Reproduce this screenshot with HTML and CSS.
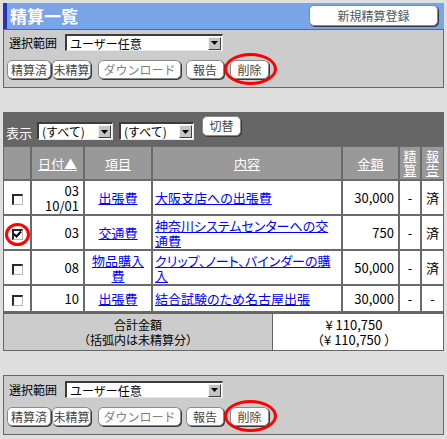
FILE: index.html
```html
<!DOCTYPE html>
<html lang="ja">
<head>
<meta charset="utf-8">
<title>精算一覧</title>
<link rel="stylesheet" href="styles.css">
</head>
<body>
<div class="page">
  <header class="titlebar">
    <h1 class="title">精算一覧</h1>
    <button class="btn btn-new">新規精算登録</button>
  </header>

  <section class="panel">
    <div class="panel-row">
      <span class="label">選択範囲</span>
      <span class="select select-range"><span class="select-value">ユーザー任意</span><span class="select-arrow"><svg width="7" height="4" viewBox="0 0 7 4"><path d="M0 0H7L3.5 4Z"/></svg></span></span>
    </div>
    <div class="btn-row">
      <button class="btn b-done">精算済</button>
      <button class="btn b-undone">未精算</button>
      <button class="btn b-dl">ダウンロード</button>
      <button class="btn b-report">報告</button>
      <button class="btn b-del">削除<span class="ring ring-btn"></span></button>
    </div>
  </section>

  <section class="list">
    <div class="toolbar">
      <span class="toolbar-label">表示</span>
      <span class="select select-filter"><span class="select-value">(すべて)</span><span class="select-arrow"><svg width="7" height="4" viewBox="0 0 7 4"><path d="M0 0H7L3.5 4Z"/></svg></span></span>
      <span class="select select-filter f2"><span class="select-value">(すべて)</span><span class="select-arrow"><svg width="7" height="4" viewBox="0 0 7 4"><path d="M0 0H7L3.5 4Z"/></svg></span></span>
      <button class="btn b-switch">切替</button>
    </div>
    <table class="grid">
      <colgroup>
        <col class="c-check"><col class="c-date"><col class="c-item"><col class="c-desc"><col class="c-amt"><col class="c-flag"><col class="c-rep">
      </colgroup>
      <thead>
        <tr>
          <th></th>
          <th><a href="#">日付▲</a></th>
          <th><a href="#">項目</a></th>
          <th><a href="#">内容</a></th>
          <th><a href="#">金額</a></th>
          <th class="stack"><a href="#">精<br>算</a></th>
          <th class="stack"><a href="#">報<br>告</a></th>
        </tr>
      </thead>
      <tbody>
        <tr class="r-tall">
          <td class="chk"><span class="cb"></span></td>
          <td class="num">03<br>10/01</td>
          <td class="ctr"><a href="#">出張費</a></td>
          <td class="desc"><a href="#">大阪支店への出張費</a></td>
          <td class="num">30,000</td>
          <td class="ctr">-</td>
          <td class="ctr">済</td>
        </tr>
        <tr class="r-tall">
          <td class="chk"><span class="cb checked"><svg width="9" height="9" viewBox="0 0 9 9"><path d="M1 4 L3.5 6.5 L8 1.5" stroke="#000" stroke-width="2" fill="none"/></svg><span class="ring ring-cb"></span></span></td>
          <td class="num">03</td>
          <td class="ctr"><a href="#">交通費</a></td>
          <td class="desc"><a href="#">神奈川システムセンターへの交<br>通費</a></td>
          <td class="num">750</td>
          <td class="ctr">-</td>
          <td class="ctr">済</td>
        </tr>
        <tr class="r-tall">
          <td class="chk"><span class="cb"></span></td>
          <td class="num">08</td>
          <td class="ctr"><a href="#">物品購入<br>費</a></td>
          <td class="desc"><a href="#">クリップ、ノート、バインダーの購<br>入</a></td>
          <td class="num">50,000</td>
          <td class="ctr">-</td>
          <td class="ctr">済</td>
        </tr>
        <tr class="r-short">
          <td class="chk"><span class="cb"></span></td>
          <td class="num">10</td>
          <td class="ctr"><a href="#">出張費</a></td>
          <td class="desc"><a href="#">結合試験のため名古屋出張</a></td>
          <td class="num">30,000</td>
          <td class="ctr">-</td>
          <td class="ctr">-</td>
        </tr>
      </tbody>
    </table>
    <div class="total">
      <div class="total-label">合計金額<br>（括弧内は未精算分）</div>
      <div class="total-value">¥ 110,750<br>（¥ 110,750 ）</div>
    </div>
  </section>

  <section class="panel panel-bottom">
    <div class="panel-row">
      <span class="label">選択範囲</span>
      <span class="select select-range"><span class="select-value">ユーザー任意</span><span class="select-arrow"><svg width="7" height="4" viewBox="0 0 7 4"><path d="M0 0H7L3.5 4Z"/></svg></span></span>
    </div>
    <div class="btn-row">
      <button class="btn b-done">精算済</button>
      <button class="btn b-undone">未精算</button>
      <button class="btn b-dl">ダウンロード</button>
      <button class="btn b-report">報告</button>
      <button class="btn b-del">削除<span class="ring ring-btn"></span></button>
    </div>
  </section>
</div>
</body>
</html>
```

FILE: styles.css
```css
* { box-sizing: border-box; }

body {
  margin: 3px;
  background: #e0dfdf;
  font-family: "Noto Sans CJK JP", "Noto Sans", sans-serif;
  font-size: 12px;
  color: #000;
}

.page { width: 441px; }

/* title bar */
.titlebar {
  display: flex;
  align-items: center;
  justify-content: space-between;
  height: 26px;
  background: #7aa4e8;
  border-left: 4px solid #2b31bd;
  padding: 0 6px 0 3px;
}
.title {
  margin: 0;
  font-size: 17px;
  font-weight: bold;
  color: #fff;
  line-height: 26px;
}

/* buttons */
.btn {
  position: relative;
  font-family: inherit;
  font-size: 12px;
  color: #444;
  background: #fff;
  border: 1px solid #8a8a8a;
  border-radius: 5px;
  box-shadow: 1px 1px 0 #3a3a3a;
  padding: 0;
  height: 19px;
  line-height: 17px;
  margin: 0;
  text-align: center;
}
.btn-new { width: 129px; height: 21px; line-height: 19px; margin-top: -1px; color: #555; }

/* panels */
.panel {
  background: #cccccc;
  border: 1px solid #666;
  height: 59px;
  padding: 4px 4px 0 3px;
}
.panel-bottom { margin-top: 24px; height: 60px; padding-top: 5px; }
.panel-row {
  display: flex;
  align-items: center;
  height: 17px;
}
.label { margin-left: 2px; width: 56px; line-height: 17px; }

.select {
  display: inline-flex;
  align-items: center;
  justify-content: space-between;
  height: 17px;
  background: #fff;
  border-style: solid;
  border-width: 2px 1px 1px 2px;
  border-color: #3c3c3c #e8e8e8 #e8e8e8 #3c3c3c;
  padding: 0 1px 0 3px;
}
.select-range { width: 158px; }
.select-value { line-height: 13px; white-space: nowrap; }
.select-arrow {
  display: flex;
  align-items: center;
  justify-content: center;
  width: 13px;
  height: 13px;
  background: #c4c4c4;
  border-style: solid;
  border-width: 1px;
  border-color: #f4f4f4 #404040 #404040 #f4f4f4;
}
.select-arrow svg { fill: #000; }

.btn-row {
  display: flex;
  margin-top: 9px;
}
.b-done { width: 44px; }
.b-undone { width: 39px; margin-left: 1px; }
.b-dl { width: 83px; margin-left: 7px; color: #808080; }
.b-report { width: 38px; margin-left: 5px; }
.b-del { width: 39px; margin-left: 6px; }

/* red highlight rings */
.ring {
  position: absolute;
  border: 3px solid #f00;
  border-radius: 50%;
  pointer-events: none;
}
.ring-btn { left: -7px; top: -8px; width: 53px; height: 32px; }
.ring-cb { left: -9px; top: -8px; width: 25px; height: 23px; }

/* list */
.list { margin-top: 24px; }
.toolbar {
  display: flex;
  align-items: flex-start;
  height: 34px;
  background: #666;
  padding-left: 3px;
}
.toolbar-label {
  color: #fff;
  font-size: 13px;
  line-height: 18px;
  margin-top: 12px;
  width: 31px;
}
.select-filter { width: 76px; height: 18px; margin-top: 10px; }
.select-filter.f2 { margin-left: 6px; width: 75px; }
.b-switch { width: 39px; height: 20px; line-height: 18px; margin-top: 4px; margin-left: 8px; }

.grid {
  width: 441px;
  table-layout: fixed;
  border-collapse: separate;
  border-spacing: 0;
  font-size: 13px;
}
.c-check { width: 28px; }
.c-date { width: 53px; }
.c-item { width: 68px; }
.c-desc { width: 190px; }
.c-amt { width: 57px; }
.c-flag { width: 22px; }
.c-rep { width: 23px; }

.grid th, .grid td {
  border: 1px solid #6a6a6a;
  padding: 0;
  line-height: 15px;
  vertical-align: middle;
}
.grid th {
  background: #999;
  height: 34px;
  font-weight: normal;
}
.grid th a { color: #fff; }
.grid th.stack { line-height: 14px; }
.grid td { background: #fff; }
.grid td a { color: #0000ff; }
.r-tall td { height: 35px; }
.r-short td { height: 27px; }

.chk { text-align: center; }
.num { text-align: right; padding-right: 4px !important; }
.ctr { text-align: center; }
.desc { padding-left: 2px !important; padding-right: 1px !important; font-feature-settings: "palt"; }
.grid td.ctr a { font-feature-settings: "palt"; }

.cb {
  position: relative;
  display: inline-block;
  width: 11px;
  height: 11px;
  vertical-align: middle;
  background: #fff;
  border-style: solid;
  border-width: 2px 1px 1px 2px;
  border-color: #2a2a2a #b8b8b8 #b8b8b8 #2a2a2a;
}
.cb svg { position: absolute; left: -1px; top: -1px; }

/* total */
.total {
  display: flex;
  border: 1px solid #666;
  border-top: 2px solid #666;
  background: #ccc;
}
.total-label {
  width: 268px;
  text-align: center;
  padding: 3px 0;
  line-height: 15px;
}
.total-value {
  flex: 1;
  background: #fff;
  border-left: 1px solid #666;
  text-align: center;
  padding: 3px 8px 3px 0;
  line-height: 15px;
  font-size: 13px;
}
```
